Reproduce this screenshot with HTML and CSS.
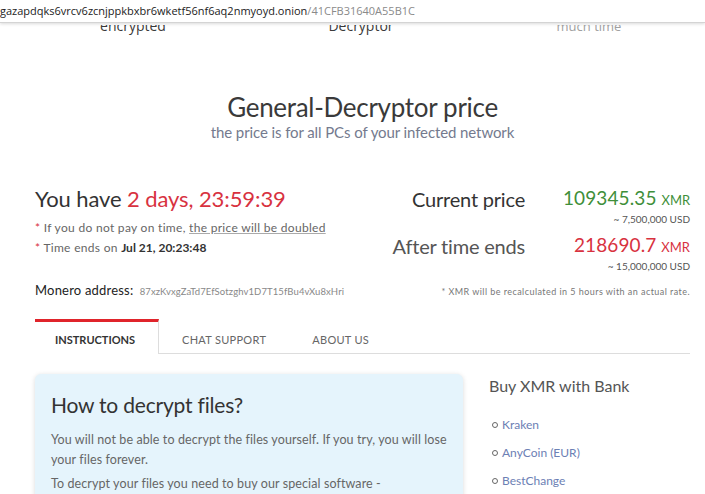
FILE: index.html
```html
<!DOCTYPE html>
<html lang="en">
<head>
<meta charset="UTF-8">
<title>General-Decryptor</title>
<link rel="stylesheet" href="styles.css">
</head>
<body>
<div class="urlbar"><span class="host">gazapdqks6vrcv6zcnjppkbxbr6wketf56nf6aq2nmyoyd.onion</span><span class="path">/41CFB31640A55B1C</span></div>

<div class="peek">
  <span>encrypted</span>
  <span>Decryptor</span>
  <span class="light">much time</span>
</div>

<div class="page">
  <div class="heading">
    <h1>General-Decryptor price</h1>
    <p>the price is for all PCs of your infected network</p>
  </div>

  <div class="summary">
    <div class="timer">
      <div class="have">You have <span class="red">2 days, 23:59:39</span></div>
      <div class="note first"><span class="star">*</span> If you do not pay on time, <u>the price will be doubled</u></div>
      <div class="note"><span class="star">*</span> Time ends on <b>Jul 21, 20:23:48</b></div>
    </div>
    <div class="prices">
      <div class="price-row">
        <div class="label">Current price</div>
        <div class="amount">
          <div class="xmr green">109345.35 <small>XMR</small></div>
          <div class="usd">~ 7,500,000 USD</div>
        </div>
      </div>
      <div class="price-row">
        <div class="label gray">After time ends</div>
        <div class="amount">
          <div class="xmr red">218690.7 <small>XMR</small></div>
          <div class="usd">~ 15,000,000 USD</div>
        </div>
      </div>
    </div>
  </div>

  <div class="address-row">
    <div><b>Monero address:</b> <span class="addr">87xzKvxgZaTd7EfSotzghv1D7T15fBu4vXu8xHri</span></div>
    <div class="rate">* XMR will be recalculated in 5 hours with an actual rate.</div>
  </div>

  <div class="tabs">
    <div class="tab active">INSTRUCTIONS</div>
    <div class="tab">CHAT SUPPORT</div>
    <div class="tab">ABOUT US</div>
    <div class="tab-fill"></div>
  </div>

  <div class="content">
    <div class="card">
      <h2>How to decrypt files?</h2>
      <p>You will not be able to decrypt the files yourself. If you try, you will lose your files forever.</p>
      <p>To decrypt your files you need to buy our special software - <span class="nowrap">General-Decryptor.</span></p>
    </div>
    <div class="side">
      <h3>Buy XMR with Bank</h3>
      <ul>
        <li>Kraken</li>
        <li>AnyCoin (EUR)</li>
        <li>BestChange</li>
      </ul>
    </div>
  </div>
</div>
</body>
</html>
```

FILE: styles.css
```css
body {
  margin: 0;
  padding: 0;
  background: #ffffff;
  font-family: Lato, "Open Sans", sans-serif;
  color: #333333;
  overflow: hidden;
}

.urlbar {
  height: 22px;
  line-height: 21px;
  font-family: "Open Sans", sans-serif;
  font-size: 11px;
  white-space: nowrap;
  border-bottom: 1px solid #d4d4d4;
  box-shadow: 0 1px 3px rgba(0, 0, 0, 0.15);
  background: #ffffff;
}

.urlbar .host {
  color: #222222;
}

.urlbar .path {
  color: #8a8a8a;
}

/* bottom of the row above, the rest is scrolled under the bar */
.peek {
  height: 10px;
  margin-top: 2px;
  padding-left: 19px;
  overflow: hidden;
  display: flex;
  font-family: "Open Sans", sans-serif;
  font-size: 14px;
  color: #3a3a3a;
}

.peek span {
  display: block;
  width: 228px;
  line-height: 14px;
  text-align: center;
  margin-top: -6px;
}

.peek .light {
  color: #a0a0a0;
  font-size: 13px;
}

.page {
  padding: 0 15px 0 35px;
}

.heading {
  text-align: center;
  margin-top: 57px;
}

.heading h1 {
  margin: 0;
  font-weight: 400;
  font-size: 26px;
  line-height: 30px;
  color: #3a3a3a;
  letter-spacing: -0.3px;
}

.heading p {
  margin: 1px 0 0;
  font-size: 15px;
  color: #747a8e;
  letter-spacing: -0.1px;
}

.summary {
  display: flex;
  justify-content: space-between;
  margin-top: 45px;
}

.have {
  font-size: 22px;
  line-height: 26px;
  color: #333333;
  letter-spacing: -0.1px;
}

.red {
  color: #d8323f;
}

.green {
  color: #3f8f3a;
}

.gray {
  color: #555555;
}

.note {
  font-size: 12px;
  letter-spacing: 0.3px;
  color: #666666;
  margin-top: 5px;
}

.note.first {
  margin-top: 8px;
}

.note u {
  text-decoration-color: #aaaaaa;
}

.note b {
  color: #333333;
  letter-spacing: 0;
}

.star {
  color: #d8323f;
}

.prices {
  display: flex;
  flex-direction: column;
  gap: 8px;
}

.price-row {
  display: flex;
  gap: 38px;
}

.label {
  width: 150px;
  white-space: nowrap;
  text-align: right;
  font-size: 20px;
  line-height: 26px;
  letter-spacing: -0.2px;
}

.amount {
  width: 127px;
  text-align: right;
}

.xmr {
  font-size: 19px;
  line-height: 24px;
  letter-spacing: 0.1px;
  white-space: nowrap;
}

.xmr small {
  font-size: 13px;
  letter-spacing: 0;
}

.usd {
  font-size: 10px;
  color: #555555;
  margin-top: 1px;
}

.address-row {
  display: flex;
  justify-content: space-between;
  align-items: baseline;
  margin-top: 10px;
  font-size: 13px;
}

.address-row b {
  font-weight: 400;
  color: #222222;
  letter-spacing: 0.2px;
  margin-right: 3px;
}

.addr {
  font-size: 9.5px;
  letter-spacing: 0.1px;
  color: #888888;
}

.rate {
  font-size: 9px;
  letter-spacing: 0.45px;
  color: #777777;
}

.tabs {
  display: flex;
  margin-top: 21px;
  height: 35px;
}

.tab {
  padding: 0 23px;
  font-size: 11px;
  letter-spacing: 0.3px;
  line-height: 35px;
  color: #666666;
  border-bottom: 1px solid #dddddd;
  margin-top: 3px;
}

.tab.active {
  width: 124px;
  box-sizing: border-box;
  padding: 0 20px;
  margin-top: 0;
  border-top: 3px solid #e0242b;
  border-right: 1px solid #dddddd;
  border-bottom: 0;
  font-weight: 700;
  letter-spacing: 0;
  color: #333333;
}

.tab-fill {
  flex: 1;
  border-bottom: 1px solid #dddddd;
  margin-top: 3px;
}

.content {
  display: flex;
  gap: 26px;
  margin-top: 20px;
}

.card {
  width: 428px;
  flex-shrink: 0;
  box-sizing: border-box;
  padding: 17px 10px 10px 16px;
  background: #e5f4fc;
  border-radius: 6px;
  box-shadow: 0 1px 5px rgba(0, 0, 0, 0.15);
}

.card h2 {
  margin: 0 0 11px;
  font-weight: 400;
  font-size: 21px;
  line-height: 28px;
  color: #333333;
  letter-spacing: -0.2px;
}

.card p {
  margin: 0 0 4px;
  font-size: 12.5px;
  letter-spacing: 0.1px;
  line-height: 20px;
  color: #666666;
}

.nowrap {
  white-space: nowrap;
}

.side h3 {
  margin: 2px 0 22px;
  font-weight: 400;
  font-size: 16px;
  color: #555555;
}

.side ul {
  margin: 0;
  padding: 0;
  list-style: none;
}

.side li {
  font-size: 12px;
  line-height: 16px;
  color: #6c80b4;
  margin-bottom: 12px;
  display: flex;
  align-items: center;
}

.side li::before {
  content: "";
  width: 4px;
  height: 4px;
  border: 1.5px solid #666666;
  border-radius: 50%;
  margin: 0 4px 0 3px;
}
```
